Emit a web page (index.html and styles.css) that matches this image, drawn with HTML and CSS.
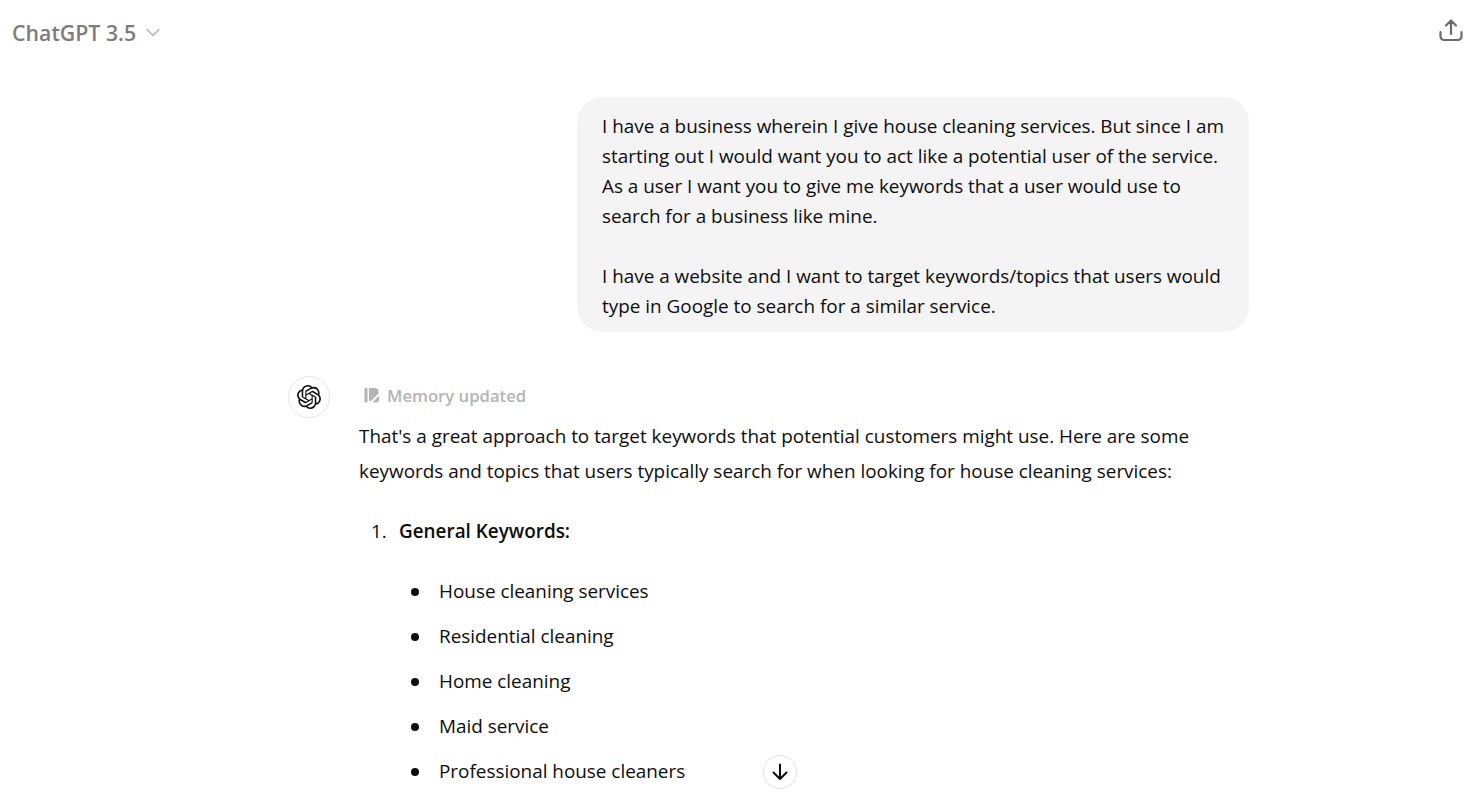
FILE: index.html
```html
<!DOCTYPE html>
<html lang="en">
<head>
<meta charset="utf-8">
<title>ChatGPT 3.5</title>
<link rel="stylesheet" href="styles.css">
</head>
<body>
<div class="page">
  <header class="topbar">
    <div class="model">ChatGPT 3.5
      <svg class="chev" width="16" height="16" viewBox="0 0 16 16" fill="none"><path d="M2 5.500l6 6 6-6" stroke="#b4b4b4" stroke-width="1.600" stroke-linecap="round" stroke-linejoin="round"/></svg>
    </div>
    <svg class="share" width="26" height="26" viewBox="0 0 26 26" fill="none"><path d="M13 17V4M8 8.500L13 3.500l5 5M2.500 15v4.500a3.500 3.500 0 0 0 3.500 3.500h14a3.500 3.500 0 0 0 3.500-3.500V15" stroke="#6b6b6b" stroke-width="2.200" stroke-linecap="round" stroke-linejoin="round"/></svg>
  </header>
  <main class="thread">
    <div class="user-row">
      <div class="bubble">
        <p class="bline">I have a business wherein I give house cleaning services. But since I am</p>
        <p class="bline">starting out I would want you to act like a potential user of the service.</p>
        <p class="bline">As a user I want you to give me keywords that a user would use to</p>
        <p class="bline">search for a business like mine.</p>
        <p class="bline">&nbsp;</p>
        <p class="bline">I have a website and I want to target keywords/topics that users would</p>
        <p class="bline">type in Google to search for a similar service.</p>
      </div>
    </div>
    <div class="bot-row">
      <div class="avatar">
        <svg width="24" height="24" viewBox="0 0 24 24" fill="#0d0d0d"><path d="M22.2819 9.8211a5.9847 5.9847 0 0 0-.5157-4.9108 6.0462 6.0462 0 0 0-6.5098-2.9A6.0651 6.0651 0 0 0 4.9807 4.1818a5.9847 5.9847 0 0 0-3.9977 2.9 6.0462 6.0462 0 0 0 .7427 7.0966 5.98 5.98 0 0 0 .511 4.9107 6.051 6.051 0 0 0 6.5146 2.9001A5.9847 5.9847 0 0 0 13.2599 24a6.0557 6.0557 0 0 0 5.7718-4.2058 5.9894 5.9894 0 0 0 3.9977-2.9001 6.0557 6.0557 0 0 0-.7475-7.0729zm-9.022 12.6081a4.4755 4.4755 0 0 1-2.8764-1.0408l.1419-.0804 4.7783-2.7582a.7948.7948 0 0 0 .3927-.6813v-6.7369l2.02 1.1686a.071.071 0 0 1 .038.052v5.5826a4.504 4.504 0 0 1-4.4945 4.4944zm-9.6607-4.1254a4.4708 4.4708 0 0 1-.5346-3.0137l.142.0852 4.783 2.7582a.7712.7712 0 0 0 .7806 0l5.8428-3.3685v2.3324a.0804.0804 0 0 1-.0332.0615L9.74 19.9502a4.4992 4.4992 0 0 1-6.1408-1.6464zM2.3408 7.8956a4.485 4.485 0 0 1 2.3655-1.9728V11.6a.7664.7664 0 0 0 .3879.6765l5.8144 3.3543-2.0201 1.1685a.0757.0757 0 0 1-.071 0l-4.8303-2.7865A4.504 4.504 0 0 1 2.3408 7.872zm16.5963 3.8558L13.1038 8.364 15.1192 7.2a.0757.0757 0 0 1 .071 0l4.8303 2.7913a4.4944 4.4944 0 0 1-.6765 8.1042v-5.6772a.79.79 0 0 0-.407-.667zm2.0107-3.0231l-.142-.0852-4.7735-2.7818a.7759.7759 0 0 0-.7854 0L9.409 9.2297V6.8974a.0662.0662 0 0 1 .0284-.0615l4.8303-2.7866a4.4992 4.4992 0 0 1 6.6802 4.66zM8.3065 12.863l-2.02-1.1638a.0804.0804 0 0 1-.038-.0567V6.0742a4.4992 4.4992 0 0 1 7.3757-3.4537l-.142.0805L8.704 5.459a.7948.7948 0 0 0-.3927.6813zm1.0976-2.3654l2.602-1.4998 2.6069 1.4998v2.9994l-2.5974 1.4997-2.6067-1.4997Z"/></svg>
      </div>
      <div class="answer">
        <div class="memory">
          <svg width="16" height="17" viewBox="0 0 16 17" fill="#b4b4b4"><path d="M0.500 1h3v14.500h-1.500a1.500 1.500 0 0 1-1.500-1.500zM5 1h6a3.500 3.500 0 0 1 3.500 3.500v2L6.500 14.500 5 13zM15 8.500l-6.500 7h3.500a3 3 0 0 0 3-3z"/></svg>
          <span>Memory updated</span>
        </div>
        <p class="intro">That's a great approach to target keywords that potential customers might use. Here are some</p>
        <p class="intro">keywords and topics that users typically search for when looking for house cleaning services:</p>
        <div class="heading-item"><span class="num">1.</span><strong>General Keywords:</strong></div>
        <ul class="keywords">
          <li>House cleaning services</li>
          <li>Residential cleaning</li>
          <li>Home cleaning</li>
          <li>Maid service</li>
          <li>Professional house cleaners</li>
        </ul>
      </div>
    </div>
  </main>
  <button class="down" type="button" aria-label="Scroll down">
    <svg width="20" height="20" viewBox="0 0 20 20" fill="none"><path d="M10 2.500V17M3.500 10.500L10 17l6.500-6.500" stroke="#0d0d0d" stroke-width="2" stroke-linecap="round" stroke-linejoin="round"/></svg>
  </button>
</div>
</body>
</html>
```
FILE: styles.css
```css
* { box-sizing: border-box; }
html, body { margin: 0; padding: 0; height: 100%; background: #fff; overflow: hidden; }
body { font-family: "Open Sans", "Noto Sans", "Liberation Sans", sans-serif; font-size: 18.9px; color: #0d0d0d; }
p { margin: 0; }
.page { position: relative; height: 800px; overflow: hidden; }
.topbar { height: 66px; padding: 0 9px 0 12px; display: flex; justify-content: space-between; align-items: center; }
.model { display: flex; align-items: center; gap: 9px; padding-bottom: 2px; font-size: 21.300px; font-weight: 600; color: #7d7d7d; }
.share { margin-top: -6px; }
.thread { padding-top: 31px; width: 961px; margin-left: 288px; }
.user-row { display: flex; justify-content: flex-end; }
.bubble { width: 672px; height: 235px; padding: 13.500px 25px 11.500px; background: #f4f4f4; border-radius: 26px; }
.bline { height: 30px; line-height: 30px; white-space: nowrap; }
.bot-row { display: flex; gap: 29px; margin-top: 44px; }
.avatar { flex: none; width: 42px; height: 42px; border: 1px solid #e6e6e6; border-radius: 50%; display: flex; align-items: center; justify-content: center; }
.answer { flex: 1; min-width: 0; }
.memory { display: flex; align-items: center; gap: 7px; height: 43px; padding-left: 5px; padding-bottom: 5px; font-size: 16.700px; font-weight: 600; color: #b4b4b4; }
.intro { height: 35px; line-height: 35px; white-space: nowrap; }
.heading-item { display: flex; margin-top: 25px; height: 35px; line-height: 35px; padding-left: 12px; }
.num { width: 28px; }
strong { font-weight: 600; }
.keywords { margin: 25px 0 0; padding: 0 0 0 80px; list-style: none; }
.keywords li { position: relative; height: 45px; line-height: 35px; white-space: nowrap; }
.keywords li::before { content: ""; position: absolute; left: -28px; top: 14px; width: 8px; height: 8px; border-radius: 50%; background: #0d0d0d; }
.down { position: absolute; left: 763px; top: 755px; width: 34px; height: 34px; padding: 0; background: #fff; border: 1px solid #e3e3e3; border-radius: 50%; display: flex; align-items: center; justify-content: center; }
```
